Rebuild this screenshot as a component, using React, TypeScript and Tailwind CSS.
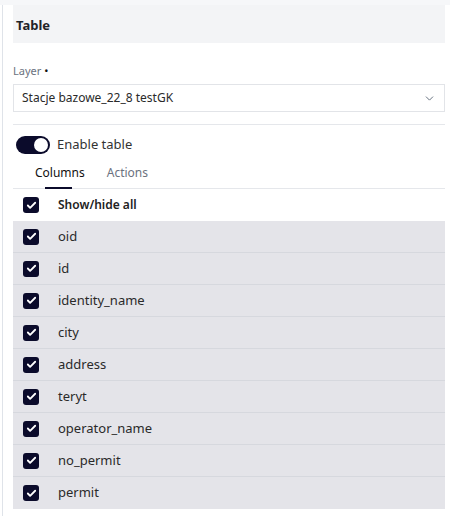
import { ChevronDown, Check } from "lucide-react";

const columns = [
  "oid",
  "id",
  "identity_name",
  "city",
  "address",
  "teryt",
  "operator_name",
  "no_permit",
  "permit",
];

function Box() {
  return (
    <span className="flex items-center justify-center w-[16px] h-[16px] rounded-[3px] bg-[#0b0b2b]">
      <Check className="w-[11px] h-[11px] text-white" strokeWidth={4} />
    </span>
  );
}

export default function App() {
  return (
    <div
      className="w-[450px] h-[516px] bg-white overflow-hidden text-[#333]"
      style={{ fontFamily: '"Noto Sans", "Open Sans", sans-serif' }}
    >
      <div className="h-[5px] bg-[#f6f7f9]" />
      <div className="ml-[2px] border-l border-[#dfe3e9] pl-[10px] pr-[5px] h-[511px]">
        {/* Header */}
        <div className="h-[38px] bg-[#f3f4f6] pl-[3px] pt-[3px] flex items-center text-[13px] font-bold text-[#1f2328]">
          Table
        </div>

        {/* Layer select */}
        <div className="mt-[21px] text-[11px] text-[#6b7280] leading-[14px]">
          Layer <span className="text-[#111]">•</span>
        </div>
        <div className="mt-[6px] h-[28px] border border-[#e2e4e8] flex items-center justify-between pl-[8px] pr-[8px] text-[12px] text-[#2a2a2a]">
          <span>Stacje bazowe_22_8 testGK</span>
          <ChevronDown className="w-[13px] h-[13px] text-[#5f6b7a]" strokeWidth={1.75} />
        </div>
        <div className="mt-[12px] border-t border-[#e5e7eb]" />

        {/* Toggle */}
        <div className="mt-[10px] h-[19px] flex items-center gap-[7px] pl-[3px]">
          <span className="flex items-center justify-end w-[34px] h-[18px] rounded-full bg-[#0b0b2b] pr-[2px]">
            <span className="w-[14px] h-[14px] rounded-full bg-white" />
          </span>
          <span className="text-[13px] text-[#333]">Enable table</span>
        </div>

        {/* Tabs */}
        <div className="mt-[10px] flex border-b border-[#e5e7eb] h-[25px] pl-[22px] gap-[22px] text-[12px]">
          <div className="relative text-[#111]">
            Columns
            <span className="absolute left-[10px] bottom-[-1px] w-[27px] h-[2px] bg-[#0b0b2b]" />
          </div>
          <div className="text-[#6b7280]">Actions</div>
        </div>

        {/* Show all */}
        <div className="h-[32px] flex items-center pl-[10px] gap-[19px]">
          <Box />
          <span className="text-[12px] font-semibold text-[#222]">Show/hide all</span>
        </div>

        {/* Rows */}
        <div className="bg-[#e4e4e9]">
          {columns.map((c) => (
            <div
              key={c}
              className="h-[32px] flex items-center pl-[10px] gap-[19px] border-b border-[#d6d8de] last:border-b-0"
            >
              <Box />
              <span className="text-[13px] text-[#2a2a2a]">{c}</span>
            </div>
          ))}
        </div>
      </div>
    </div>
  );
}
